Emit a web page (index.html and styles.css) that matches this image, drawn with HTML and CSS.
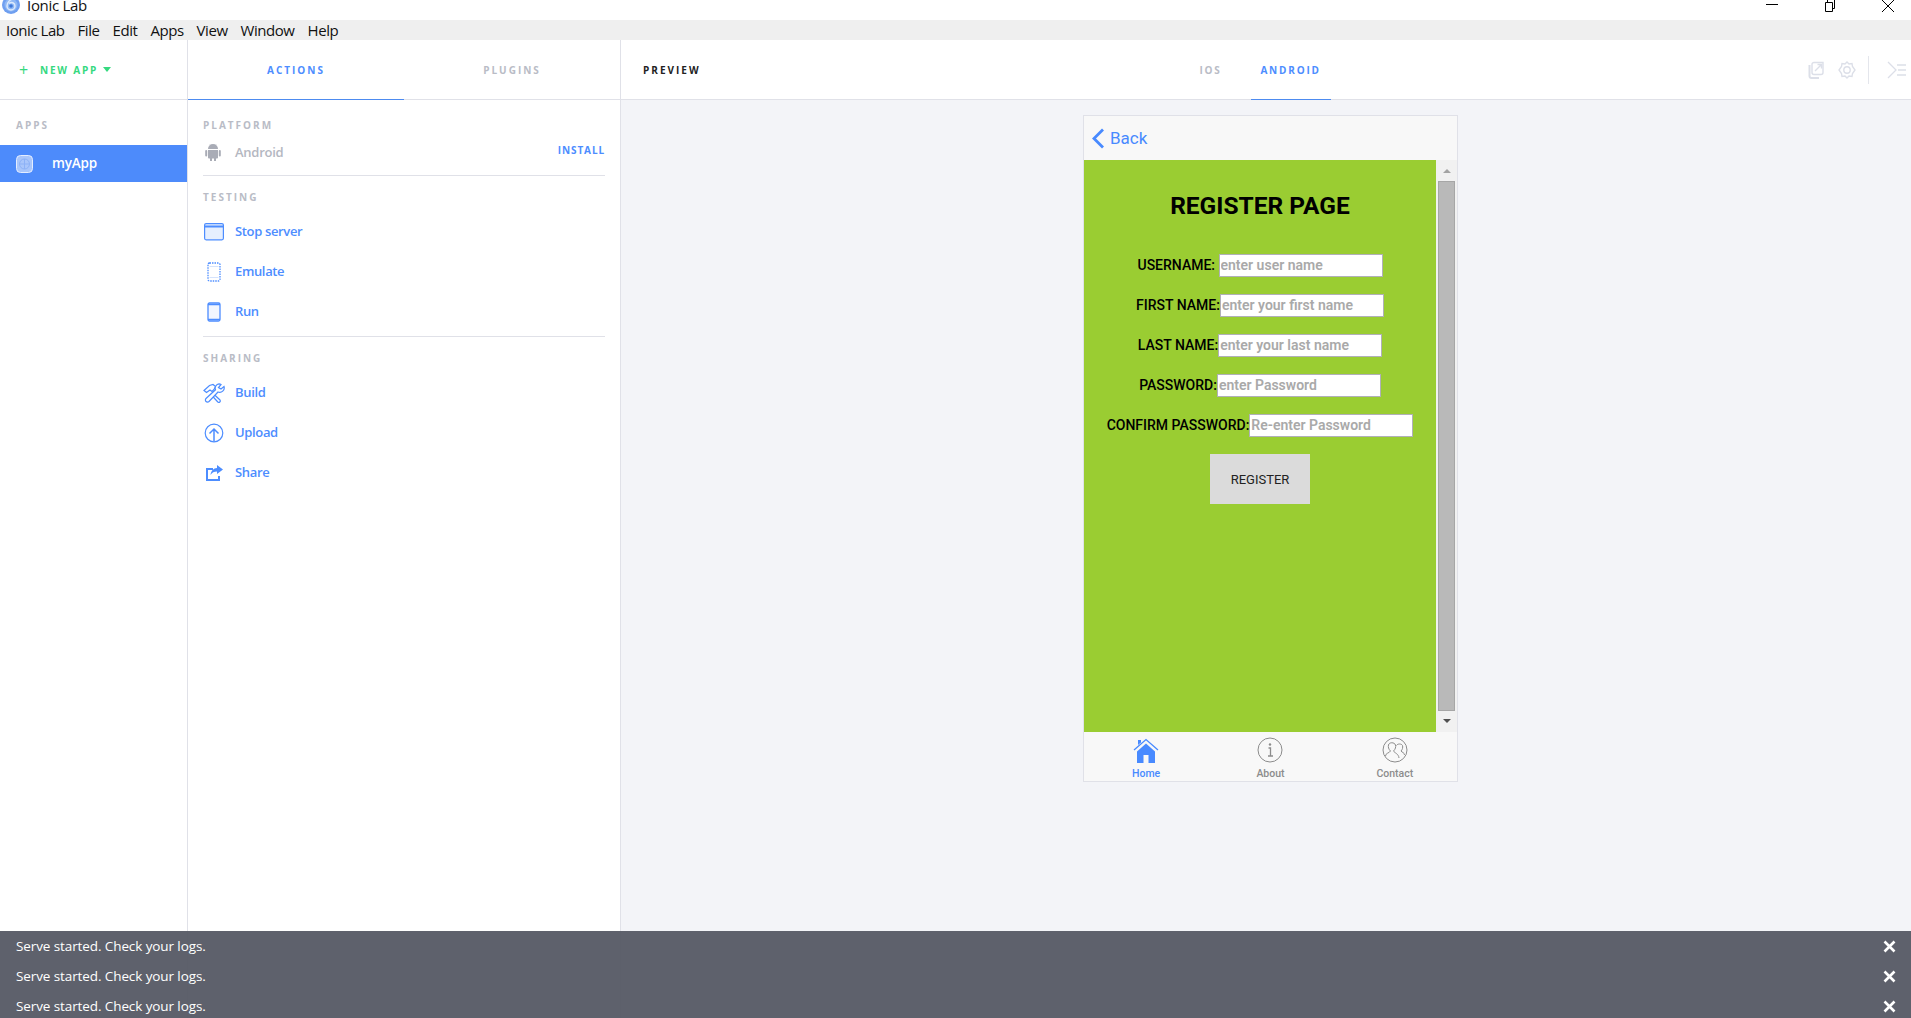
FILE: index.html
```html
<!DOCTYPE html>
<html lang="en">
  <head>
    <title>Ionic Lab</title>
    <link rel="stylesheet" href="styles.css">
  </head>
  <body>
    <header class="titlebar">
      <svg class="app-logo" width="18" height="18" viewBox="0 0 18 18">
        <circle cx="9" cy="9" r="9" fill="#6f9ff0"/>
        <circle cx="9" cy="9" r="6.500" fill="#8fb8f5"/>
        <path d="M12 2.500C8 3.500 5 6.500 5 10a4 4 0 0 0 8 0 3.500 3.500 0 0 0-6-2.500" fill="none" stroke="#dce9fb" stroke-width="1.500"/>
        <circle cx="9" cy="10" r="1.800" fill="#3f78d8"/>
      </svg>
      <span class="app-title">Ionic Lab</span>
      <div class="window-controls">
        <svg width="12" height="10" viewBox="0 0 12 10"><path d="M0 4.500h12" stroke="#000"/></svg>
        <svg width="12" height="12" viewBox="0 0 12 12"><path d="M1.500 2.500h7v9h-7zM3.500 2.500v-3h7v9h-2" fill="none" stroke="#000"/></svg>
        <svg width="12" height="12" viewBox="0 0 12 12"><path d="M0 0l12 12M12 0L0 12" stroke="#000"/></svg>
      </div>
    </header>
    <nav class="menubar">
      <span>Ionic Lab</span>
      <span>File</span>
      <span>Edit</span>
      <span>Apps</span>
      <span>View</span>
      <span>Window</span>
      <span>Help</span>
    </nav>

    <div class="workspace">
      <aside class="apps-col">
        <div class="new-app">
          <span class="plus">+</span>
          <span>NEW APP</span>
          <span class="caret"></span>
        </div>
        <div class="apps-list">
          <h4 class="label">APPS</h4>
          <div class="app-row">
            <svg width="17" height="18" viewBox="0 0 17 18">
              <rect x=".5" y=".5" width="16" height="17" rx="4" fill="#a9c6fb" stroke="#e4edff"/>
              <circle cx="8.500" cy="9" r="5" fill="none" stroke="#8db2f7"/>
              <path d="M8.500 4v10M3.500 9h10" stroke="#8db2f7"/>
            </svg>
            <span>myApp</span>
          </div>
        </div>
      </aside>

      <section class="actions-col">
        <div class="tabs">
          <div class="tab active">ACTIONS</div>
          <div class="tab">PLUGINS</div>
        </div>
        <div class="actions-body">
          <div class="group group-platform">
            <h4 class="label">PLATFORM</h4>
            <div class="platform-row">
              <svg width="20" height="20" viewBox="0 0 20 20" fill="#a9acb6">
                <path d="M5 7a5 5 0 0 1 10 0z"/>
                <path d="M7 2.500l1.200 2M13 2.500l-1.200 2" stroke="#a9acb6" stroke-width=".8"/>
                <path d="M5 8h10v7.500a1 1 0 0 1-1 1h-1v2.500h-2v-2.500H9v2.500H7v-2.500H6a1 1 0 0 1-1-1z"/>
                <rect x="2.200" y="8" width="2" height="6.500" rx="1"/>
                <rect x="15.800" y="8" width="2" height="6.500" rx="1"/>
              </svg>
              <span class="platform-name">Android</span>
              <a class="install">INSTALL</a>
            </div>
          </div>

          <div class="group group-testing">
            <h4 class="label">TESTING</h4>
            <div class="action">
              <svg width="20" height="18" viewBox="0 0 20 18">
                <rect x=".6" y=".6" width="18.800" height="16.200" rx="1.500" fill="#e6effe" stroke="#4d8dff" stroke-width="1.200"/>
                <path d="M.6 3.500h18.800" stroke="#4d8dff" stroke-width="2"/>
              </svg>
              <span>Stop server</span>
            </div>
            <div class="action">
              <svg width="20" height="20" viewBox="0 0 20 20">
                <rect x="4" y="1" width="12" height="18" rx="1.500" fill="#fff" stroke="#4d8dff" stroke-width="1.300" stroke-dasharray="1.500 1"/>
                <path d="M5.500 4.500h9M5.500 15.500h9" stroke="#d5e3fd"/>
              </svg>
              <span>Emulate</span>
            </div>
            <div class="action">
              <svg width="20" height="20" viewBox="0 0 20 20">
                <rect x="4" y="1" width="12" height="18" rx="1.500" fill="#f2f6ff" stroke="#4d8dff" stroke-width="1.300"/>
                <path d="M4 2.500h12M4 17.500h12" stroke="#4d8dff" stroke-width="1.600"/>
              </svg>
              <span>Run</span>
            </div>
          </div>

          <div class="group group-sharing">
            <h4 class="label">SHARING</h4>
            <div class="action">
              <svg width="22" height="20" viewBox="0 0 22 20" fill="none" stroke="#4d8dff" stroke-width="1.200">
                <path d="M1 7.500L6.500 2.500 10 1.500l2.500 2-1.500 3-2 2-2-1.500-3.500 2.500z"/>
                <path d="M9 9.500l8 7.500a1.500 1.500 0 0 1-2.200 2L7.500 11"/>
                <path d="M16 .8a4.500 4.500 0 0 0-3.500 6L3 15.500a2 2 0 0 0 3 3L15 9a4.500 4.500 0 0 0 6-5.500L18 6l-2.500-1.500L18 1.500a4 4 0 0 0-2-.7z" fill="#fff"/>
              </svg>
              <span>Build</span>
            </div>
            <div class="action">
              <svg width="20" height="20" viewBox="0 0 20 20" fill="none" stroke="#4d8dff" stroke-width="1.200">
                <circle cx="10" cy="10" r="8.800"/>
                <path d="M10 18.500V6M5.500 10.500L10 6l4.500 4.500" stroke-width="1.500"/>
              </svg>
              <span>Upload</span>
            </div>
            <div class="action">
              <svg width="20" height="18" viewBox="0 0 20 18">
                <path d="M13 1l6 4.500-6 4.500V7.500c-3 0-5 1-6.500 3.500.5-4 3-7 6.500-7z" fill="#4d8dff"/>
                <path d="M9 5H3v11h12v-4" fill="none" stroke="#4d8dff" stroke-width="2"/>
              </svg>
              <span>Share</span>
            </div>
          </div>
        </div>
      </section>

      <section class="preview-col">
        <div class="preview-bar">
          <span class="preview-title">PREVIEW</span>
          <div class="platform-tabs">
            <div class="ptab">IOS</div>
            <div class="ptab active">ANDROID</div>
          </div>
          <div class="preview-tools">
            <svg width="18" height="18" viewBox="0 0 18 18" fill="none" stroke="#dcdfe8" stroke-width="1.400">
              <path d="M7 1.500h9v10a2 2 0 0 1-2 2H7a2 2 0 0 1-2-2v-8a2 2 0 0 1 2-2z"/>
              <path d="M2.500 4v11a2 2 0 0 0 2 2H12" stroke-width="2"/>
              <path d="M8 10l6-6M10.500 3.500H14.500V7.500"/>
            </svg>
            <svg width="18" height="18" viewBox="0 0 18 18" fill="none" stroke="#dcdfe8" stroke-width="1.400">
              <path d="M9 1l2 2 3-.5.5 3L17 9l-2.500 3.500-.5 3-3-.5-2 2-2-2-3 .5-.5-3L1 9l2.500-3.500.5-3 3 .5z"/>
              <circle cx="9" cy="9" r="3.200"/>
            </svg>
            <span class="tool-sep"></span>
            <svg width="20" height="18" viewBox="0 0 20 18" fill="none" stroke="#dcdfe8" stroke-width="1.300">
              <path d="M1 1l8 8-8 8M10 4h9M11 9h8M10 14h9"/>
            </svg>
          </div>
        </div>

        <div class="preview-body">
          <div class="phone">
            <div class="phone-nav">
              <svg width="13" height="21" viewBox="0 0 13 21"><path d="M11 1.500l-9 9 9 9" fill="none" stroke="#488aff" stroke-width="2.800"/></svg>
              <span>Back</span>
            </div>
            <div class="phone-content">
              <div class="page">
                <h2>REGISTER PAGE</h2>
                <form class="reg-form">
                  <div class="field"><label>USERNAME: </label><input placeholder="enter user name"></div>
                  <div class="field"><label>FIRST NAME:</label><input placeholder="enter your first name"></div>
                  <div class="field"><label>LAST NAME:</label><input placeholder="enter your last name"></div>
                  <div class="field"><label>PASSWORD:</label><input placeholder="enter Password"></div>
                  <div class="field"><label>CONFIRM PASSWORD:</label><input placeholder="Re-enter Password"></div>
                  <button class="reg-btn" type="button">REGISTER</button>
                </form>
              </div>
              <div class="scrollbar">
                <span class="arrow-up"></span>
                <div class="thumb"></div>
                <span class="arrow-down"></span>
              </div>
            </div>
            <div class="phone-tabs">
              <div class="ptabitem on">
                <svg width="26" height="26" viewBox="0 0 26 26">
                  <path d="M13 6.500L4 14.500V26h6.500v-8h5v8H22V14.500z" fill="#488aff"/>
                  <path d="M1 13L13 2.500 25 13" fill="none" stroke="#488aff" stroke-width="1.300"/>
                  <path d="M5 8V3h3v2.500z" fill="#488aff"/>
                </svg>
                <span>Home</span>
              </div>
              <div class="ptabitem">
                <svg width="26" height="26" viewBox="0 0 26 26" fill="none" stroke="#8c8c8c">
                  <circle cx="13" cy="13" r="12"/>
                  <path d="M11.500 11H13.500V19M11 19h5" stroke-width="1.300"/>
                  <circle cx="13" cy="7.500" r="1.200" fill="#8c8c8c" stroke="none"/>
                </svg>
                <span>About</span>
              </div>
              <div class="ptabitem">
                <svg width="26" height="26" viewBox="0 0 26 26" fill="none" stroke="#8c8c8c">
                  <circle cx="13" cy="13" r="12"/>
                  <path d="M3.500 19c0-3 4-3 5-5-2-2-2.500-4-2-6 .5-3 6-3 7 0 .5 2 0 4-2 6 1 2 5 2.500 5.500 7"/>
                  <path d="M14.500 8.500c1-2 5-2 6 0 .5 2 0 4-1.500 5.500 1 1.500 3.500 1.500 3.500 4"/>
                </svg>
                <span>Contact</span>
              </div>
            </div>
          </div>
        </div>
      </section>
    </div>

    <div class="toasts">
      <div class="toast">
        <span>Serve started. Check your logs.</span>
        <svg width="13" height="13" viewBox="0 0 13 13"><path d="M1.500 1.500l10 10M11.500 1.500l-10 10" stroke="#fff" stroke-width="2.600"/></svg>
      </div>
      <div class="toast">
        <span>Serve started. Check your logs.</span>
        <svg width="13" height="13" viewBox="0 0 13 13"><path d="M1.500 1.500l10 10M11.500 1.500l-10 10" stroke="#fff" stroke-width="2.600"/></svg>
      </div>
      <div class="toast">
        <span>Serve started. Check your logs.</span>
        <svg width="13" height="13" viewBox="0 0 13 13"><path d="M1.500 1.500l10 10M11.500 1.500l-10 10" stroke="#fff" stroke-width="2.600"/></svg>
      </div>
    </div>
  </body>
</html>
```

FILE: styles.css
```css
* {
  box-sizing: border-box;
}

body {
  margin: 0;
  height: 100vh;
  overflow: hidden;
  display: flex;
  flex-direction: column;
  font-family: "Open Sans", "Noto Sans", sans-serif;
  background: #fff;
  color: #222;
}

/* window chrome */
.titlebar {
  height: 20px;
  flex: none;
  display: flex;
  align-items: flex-start;
  padding-left: 2px;
  overflow: hidden;
  background: #fff;
}

.app-logo {
  margin-top: -4px;
  flex: none;
}

.app-title {
  margin-left: 7px;
  margin-top: -5px;
  font-size: 15px;
  line-height: 20px;
  letter-spacing: -.3px;
  color: #111;
}

.window-controls {
  margin-left: auto;
  margin-right: 17px;
  display: flex;
  gap: 46px;
  align-items: flex-start;
}

.window-controls svg {
  display: block;
}

.menubar {
  height: 20px;
  flex: none;
  display: flex;
  gap: 13px;
  align-items: center;
  padding-left: 6px;
  background: #efefef;
  font-size: 15px;
  letter-spacing: -.45px;
  color: #111;
}

.workspace {
  flex: 1;
  display: flex;
  min-height: 0;
}

/* left column */
.apps-col {
  width: 188px;
  flex: none;
  border-right: 1px solid #e0e1e8;
}

.new-app {
  height: 60px;
  display: flex;
  align-items: center;
  gap: 4px;
  padding-left: 19px;
  border-bottom: 1px solid #e0e1e8;
  font-size: 10px;
  font-weight: 700;
  letter-spacing: 1.800px;
  color: #35d97f;
}

.new-app .plus {
  width: 17px;
  font-size: 16px;
  font-weight: 400;
  letter-spacing: 0;
  line-height: 16px;
}

.new-app .caret {
  margin-left: 1px;
  border-left: 4px solid transparent;
  border-right: 4px solid transparent;
  border-top: 5px solid #35d97f;
}

.label {
  margin: 0;
  font-size: 10px;
  line-height: 14px;
  font-weight: 700;
  letter-spacing: 2px;
  color: #b9bcc6;
}

.apps-list {
  padding-top: 18px;
}

.apps-list .label {
  padding-left: 16px;
}

.app-row {
  margin-top: 13px;
  height: 37px;
  width: 187px;
  display: flex;
  align-items: center;
  gap: 19px;
  padding-left: 16px;
  background: #4d8bfb;
  color: #fff;
  font-size: 13.500px;
  font-weight: 600;
  letter-spacing: -.2px;
}

.app-row span {
  margin-bottom: 2px;
}

/* actions column */
.actions-col {
  width: 433px;
  flex: none;
  border-right: 1px solid #e0e1e8;
}

.tabs {
  height: 60px;
  display: flex;
}

.tab {
  width: 50%;
  display: flex;
  align-items: center;
  justify-content: center;
  border-bottom: 1px solid #e0e1e8;
  font-size: 10px;
  font-weight: 700;
  letter-spacing: 2px;
  color: #b9bcc6;
}

.tab.active {
  color: #4d8dff;
  border-bottom-color: #4d8bf0;
}

.actions-body {
  padding: 18px 15px 0;
}

.group + .group {
  border-top: 1px solid #e0e1e8;
}

.group-platform {
  height: 57px;
}

.group-testing {
  height: 161px;
  padding-top: 14px;
}

.group-sharing {
  padding-top: 14px;
}

.platform-row {
  display: flex;
  align-items: center;
  height: 20px;
  margin-top: 10px;
  font-size: 13px;
  font-weight: 600;
  letter-spacing: -.25px;
  color: #b4b7c1;
}

.platform-name {
  margin-left: 12px;
}

.install {
  margin-left: auto;
  font-size: 10px;
  font-weight: 700;
  letter-spacing: .9px;
  color: #4d8dff;
  margin-bottom: 4px;
}

.action {
  height: 40px;
  display: flex;
  align-items: center;
  gap: 10px;
  font-size: 13px;
  font-weight: 600;
  letter-spacing: -.35px;
  color: #4d8dff;
}

.group-testing .label {
  margin-bottom: 8px;
}

.group-sharing .label {
  margin-bottom: 8px;
}

.action svg {
  flex: none;
  width: 22px;
}

.action span {
  margin-bottom: 3px;
}

/* preview */
.preview-col {
  flex: 1;
  min-width: 0;
  display: flex;
  flex-direction: column;
  background: #f3f4f8;
}

.preview-bar {
  height: 60px;
  flex: none;
  display: flex;
  align-items: stretch;
  padding-left: 22px;
  background: #fff;
  border-bottom: 1px solid #e0e1e8;
}

.preview-title {
  align-self: center;
  font-size: 10px;
  font-weight: 700;
  letter-spacing: 2px;
  color: #222;
}

.platform-tabs {
  margin-left: 470px;
  display: flex;
}

.ptab {
  width: 80px;
  margin-bottom: -1px;
  display: flex;
  align-items: center;
  justify-content: center;
  border-bottom: 1px solid transparent;
  font-size: 10px;
  font-weight: 700;
  letter-spacing: 1.800px;
  color: #b9bcc6;
}

.ptab.active {
  color: #4d8dff;
  border-bottom-color: #4d8bf0;
}

.preview-tools {
  margin-left: auto;
  padding-right: 4px;
  display: flex;
  align-items: center;
  gap: 13px;
}

.tool-sep {
  width: 1px;
  height: 28px;
  background: #e4e6ec;
  margin-left: -1px;
  margin-right: 5px;
}

.preview-body {
  flex: 1;
  padding: 15px 0 0 462px;
}

.phone {
  width: 375px;
  height: 667px;
  display: flex;
  flex-direction: column;
  border: 1px solid #e0e1e8;
  background: #f8f8f8;
  font-family: Roboto, sans-serif;
}

.phone-nav {
  height: 44px;
  flex: none;
  display: flex;
  align-items: center;
  gap: 5px;
  padding-left: 8px;
  color: #488aff;
  font-size: 17px;
}

.phone-content {
  flex: 1;
  min-height: 0;
  display: flex;
}

.page {
  flex: 1;
  background: #9acd32;
  color: #000;
  text-align: center;
}

.page h2 {
  margin: 31px 0 0;
  font-size: 24.500px;
  line-height: 30px;
  font-weight: 700;
}

.reg-form {
  margin-top: 24px;
}

.field {
  height: 40px;
  display: flex;
  align-items: center;
  justify-content: center;
  font-size: 14px;
  font-weight: 500;
}

.field label {
  white-space: pre;
}

.field input {
  width: 164px;
  height: 23px;
  padding: 0 1px;
  border: 1px solid #b0b0b8;
  background: #fff;
  font-family: Roboto, sans-serif;
  font-size: 14px;
  font-weight: 600;
}

.field input::placeholder {
  color: #a9a9a9;
}

.reg-btn {
  display: block;
  width: 100px;
  height: 50px;
  margin: 9px auto 0;
  border: 0;
  background: #dbdbdb;
  color: #222;
  font-family: Roboto, sans-serif;
  font-size: 13px;
}

.scrollbar {
  width: 21px;
  flex: none;
  display: flex;
  flex-direction: column;
  align-items: center;
  background: #f1f1f1;
}

.arrow-up {
  margin: 9px 0 8px;
  border-left: 4px solid transparent;
  border-right: 4px solid transparent;
  border-bottom: 4px solid #a3a3a3;
}

.thumb {
  width: 17px;
  flex: 1;
  background: #b9b9b9;
  border: 1px solid #a6a6a6;
}

.arrow-down {
  margin: 8px 0 9px;
  border-left: 4px solid transparent;
  border-right: 4px solid transparent;
  border-top: 4px solid #505050;
}

.phone-tabs {
  height: 49px;
  flex: none;
  display: flex;
}

.ptabitem {
  flex: 1;
  display: flex;
  flex-direction: column;
  align-items: center;
  padding-top: 5px;
  font-size: 10.500px;
  font-weight: 500;
  color: #8c8c8c;
}

.ptabitem svg {
  display: block;
  flex: none;
}

.ptabitem span {
  margin-top: 5px;
  line-height: 12px;
}

.ptabitem.on {
  color: #488aff;
}

/* notifications sit over the columns */
.toasts {
  position: absolute;
  left: 0;
  right: 0;
  bottom: 0;
  height: 87px;
  background: rgba(85, 89, 100, .95);
  color: #fff;
}

.toast {
  height: 30px;
  display: flex;
  align-items: center;
  justify-content: space-between;
  padding: 0 15px 0 16px;
  font-size: 13.500px;
  letter-spacing: -.1px;
}
```
